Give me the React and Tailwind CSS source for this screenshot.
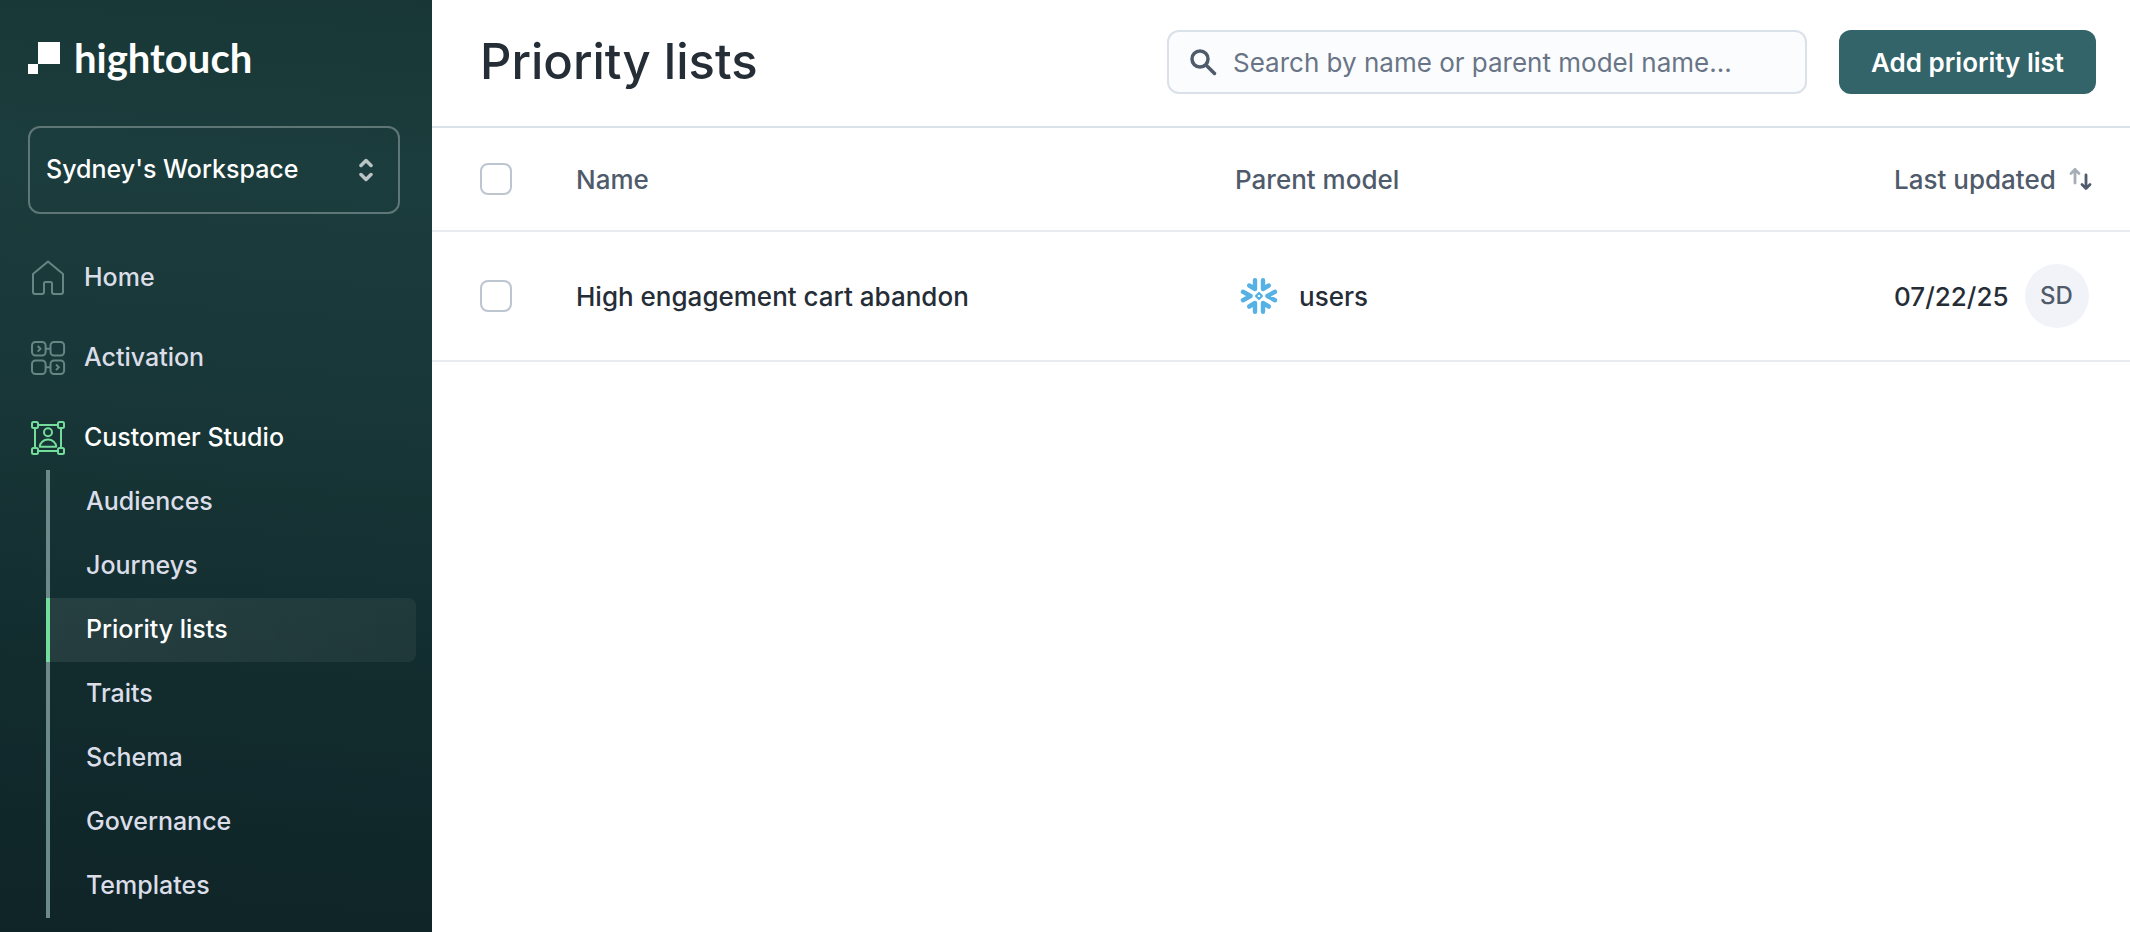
import React, { useState } from 'react';

const navItems = [
  { label: 'Home', Icon: HomeIcon },
  { label: 'Activation', Icon: ActivationIcon },
  { label: 'Customer Studio', Icon: StudioIcon, active: true },
];

const studioItems = ['Audiences', 'Journeys', 'Priority lists', 'Traits', 'Schema', 'Governance', 'Templates'];

const priorityLists = [
  { id: 1, name: 'High engagement cart abandon', model: 'users', updatedAt: '07/22/25', initials: 'SD' },
];

function HomeIcon() {
  return (
    <svg className="size-10 shrink-0" viewBox="0 0 40 40" fill="none" stroke="currentColor" strokeWidth="2" strokeLinejoin="round" aria-hidden="true">
      <path d="M20 3.500 35 16V34a2 2 0 0 1-2 2H26a2 2 0 0 1-2-2V25.500a1.500 1.500 0 0 0-1.500-1.500H17.500a1.500 1.500 0 0 0-1.500 1.500V34a2 2 0 0 1-2 2H7a2 2 0 0 1-2-2V16Z" />
    </svg>
  );
}

function ActivationIcon() {
  return (
    <svg className="size-10 shrink-0" viewBox="0 0 40 40" fill="none" stroke="currentColor" strokeWidth="2" aria-hidden="true">
      <rect x="4" y="4" width="13.600" height="13.600" rx="3.500" />
      <rect x="22.500" y="4" width="13.600" height="13.600" rx="3.500" />
      <rect x="4" y="22.500" width="13.600" height="13.600" rx="3.500" />
      <rect x="22.500" y="22.500" width="13.600" height="13.600" rx="3.500" />
      <path d="M17.600 10.800h4.900M17.600 29.300h4.900M9.700 8l2.800 2.800-2.800 2.800M28 26.500l2.800 2.800-2.800 2.800" />
    </svg>
  );
}

function StudioIcon() {
  return (
    <svg className="size-10 shrink-0" viewBox="0 0 40 40" fill="none" stroke="currentColor" strokeWidth="2" strokeLinejoin="round" aria-hidden="true">
      <rect x="4" y="4" width="6" height="6" rx="1.500" />
      <rect x="30" y="4" width="6" height="6" rx="1.500" />
      <rect x="4" y="30" width="6" height="6" rx="1.500" />
      <rect x="30" y="30" width="6" height="6" rx="1.500" />
      <path d="M10 7h20M10 33h20M7 10v20M33 10v20" />
      <circle cx="20" cy="14.200" r="4" />
      <path d="M11.800 28.800a8.200 7.200 0 0 1 16.400 0Z" />
    </svg>
  );
}

function SnowflakeIcon() {
  return (
    <svg className="size-10 shrink-0" viewBox="0 0 40 40" fill="none" stroke="#56b1e5" strokeWidth="4.400" strokeLinecap="round" strokeLinejoin="round" aria-hidden="true">
      <path d="M16 4.200v8.800l-5.800-3.500M24 4.200v8.800l5.800-3.500" />
      <path d="M16 35.800v-8.800l-5.800 3.500M24 35.800v-8.800l5.800 3.500" />
      <path d="M4 15.800 11.600 20 4 24.200M36 15.800 28.400 20l7.600 4.200" />
      <path d="m20 17 3 3-3 3-3-3Z" strokeWidth="2.200" />
    </svg>
  );
}

function Sidebar() {
  return (
    <aside className="w-108 shrink-0 bg-[linear-gradient(184deg,#183636_0%,#1c3d3d_18%,#183637_45%,#122c2e_72%,#0f2427_100%)] pb-3.5">
      <a href="#" className="mx-7 flex h-31 items-center gap-3.5 pb-2 text-white">
        <svg className="h-8 w-8" viewBox="0 0 32 32" fill="currentColor" aria-hidden="true">
          <rect x="10" y="0" width="22" height="22" />
          <rect x="0" y="22" width="10" height="10" />
        </svg>
        <span className="font-[Lato,sans-serif] text-[40px] leading-10 font-bold">hightouch</span>
      </a>

      <button className="mx-7 mt-0.5 flex h-22 w-93 items-center justify-between rounded-xl border-2 border-white/30 px-4 text-[25px] font-medium text-white">
        Sydney's Workspace
        <svg className="h-8 w-8" viewBox="0 0 32 32" fill="none" stroke="currentColor" strokeWidth="3.500" strokeLinecap="round" strokeLinejoin="round" opacity="0.7" aria-hidden="true">
          <path d="m11 11.500 5-5 5 5M11 20.500l5 5 5-5" />
        </svg>
      </button>

      <nav className="mt-6">
        {navItems.map(({ label, Icon, active }) => (
          <a key={label} href="#" className={`flex h-20 items-center gap-4 px-7 text-[25px] font-medium ${active ? 'text-white' : 'text-[#dbdee8]'}`}>
            <span className={active ? 'text-[#75dd9b]' : 'text-[#668683]'}><Icon /></span>
            {label}
          </a>
        ))}
        <div className="-mt-2 mr-4 ml-11.5">
          {studioItems.map(item => {
            const selected = item === 'Priority lists';
            return (
              <a
                key={item}
                href="#"
                className={`flex h-16 items-center border-l-4 pl-9 text-[25px] font-medium ${selected ? 'rounded-r-lg border-[#75dd9b] bg-linear-to-r from-white/8 to-white/5 text-white' : 'border-[#6b8a89] text-[#dbdee8]'}`}
              >
                {item}
              </a>
            );
          })}
        </div>
      </nav>
    </aside>
  );
}

function Checkbox({ label, checked, onChange }) {
  return (
    <input
      type="checkbox"
      aria-label={label}
      checked={checked}
      onChange={onChange}
      className="block size-8 appearance-none rounded-lg border-2 border-[#bcc5d0] bg-white checked:border-[#33666a] checked:bg-[#33666a]"
    />
  );
}

export default function App() {
  const [search, setSearch] = useState('');
  const [selected, setSelected] = useState([]);

  const rows = priorityLists.filter(l => `${l.name} ${l.model}`.toLowerCase().includes(search.toLowerCase()));
  const allSelected = rows.length > 0 && rows.every(l => selected.includes(l.id));

  const toggleRow = (id) => {
    setSelected(selected.includes(id) ? selected.filter(s => s !== id) : [...selected, id]);
  };

  return (
    <div className="flex min-h-screen bg-white font-[Inter,sans-serif] text-[#252d37]">
      <Sidebar />

      <main className="min-w-0 flex-1">
        <header className="flex h-32 items-center gap-8 border-b-2 border-[#dbe1e8] pr-8.5 pb-0.5 pl-12">
          <h1 className="flex-1 text-[49px] font-medium">Priority lists</h1>
          <label className="flex h-16 w-160 items-center gap-3 rounded-xl border-2 border-[#dbe1e8] bg-[#fbfcfe] px-4">
            <svg className="size-9 shrink-0 text-[#4f5b6b]" viewBox="0 0 36 36" fill="none" stroke="currentColor" strokeWidth="3.500" strokeLinecap="round" aria-hidden="true">
              <circle cx="15" cy="15" r="8" />
              <path d="m21.500 21.500 8 8" />
            </svg>
            <input
              type="text"
              aria-label="Search by name or parent model name"
              value={search}
              onChange={e => setSearch(e.target.value)}
              placeholder="Search by name or parent model name..."
              className="min-w-0 flex-1 bg-transparent text-[26px] outline-none placeholder:text-[#697586]"
            />
          </label>
          <button className="h-16 rounded-xl bg-[#336469] px-8 text-[26px] font-semibold text-white">Add priority list</button>
        </header>

        <table className="w-full table-fixed border-separate border-spacing-0 text-left text-[26px] font-medium [&_td]:border-b-2 [&_td]:border-[#e8ecf0] [&_th]:border-b-2 [&_th]:border-[#e8ecf0]">
          <colgroup>
            <col className="w-36" />
            <col />
            <col />
            <col className="w-59" />
          </colgroup>
          <thead>
            <tr className="h-26 text-[#4f5b6b]">
              <th className="pl-12">
                <Checkbox label="Select all" checked={allSelected} onChange={() => setSelected(allSelected ? [] : rows.map(l => l.id))} />
              </th>
              <th className="font-medium">Name</th>
              <th className="font-medium">Parent model</th>
              <th className="font-medium">
                <button className="flex items-center gap-3 whitespace-nowrap">
                  Last updated
                  <svg className="h-6 w-6" viewBox="0 0 24 24" fill="none" stroke="currentColor" strokeWidth="2.800" strokeLinecap="round" strokeLinejoin="round" aria-hidden="true">
                    <path d="M7 16V2.500M3 6.500l4-4 4 4" opacity="0.5" />
                    <path d="M18 8v13.500M14 17.500l4 4 4-4" />
                  </svg>
                </button>
              </th>
            </tr>
          </thead>
          <tbody>
            {rows.map(l => (
              <tr key={l.id} className="h-32.5">
                <td className="pl-12">
                  <Checkbox label={`Select ${l.name}`} checked={selected.includes(l.id)} onChange={() => toggleRow(l.id)} />
                </td>
                <td>{l.name}</td>
                <td>
                  <div className="flex items-center gap-5 pl-1">
                    <SnowflakeIcon />
                    {l.model}
                  </div>
                </td>
                <td>
                  <div className="flex items-center gap-4">
                    {l.updatedAt}
                    <span className="flex size-16 items-center justify-center rounded-full bg-[#f2f3f8] text-2xl text-[#4f5b6b]">{l.initials}</span>
                  </div>
                </td>
              </tr>
            ))}
          </tbody>
        </table>
      </main>
    </div>
  );
}
